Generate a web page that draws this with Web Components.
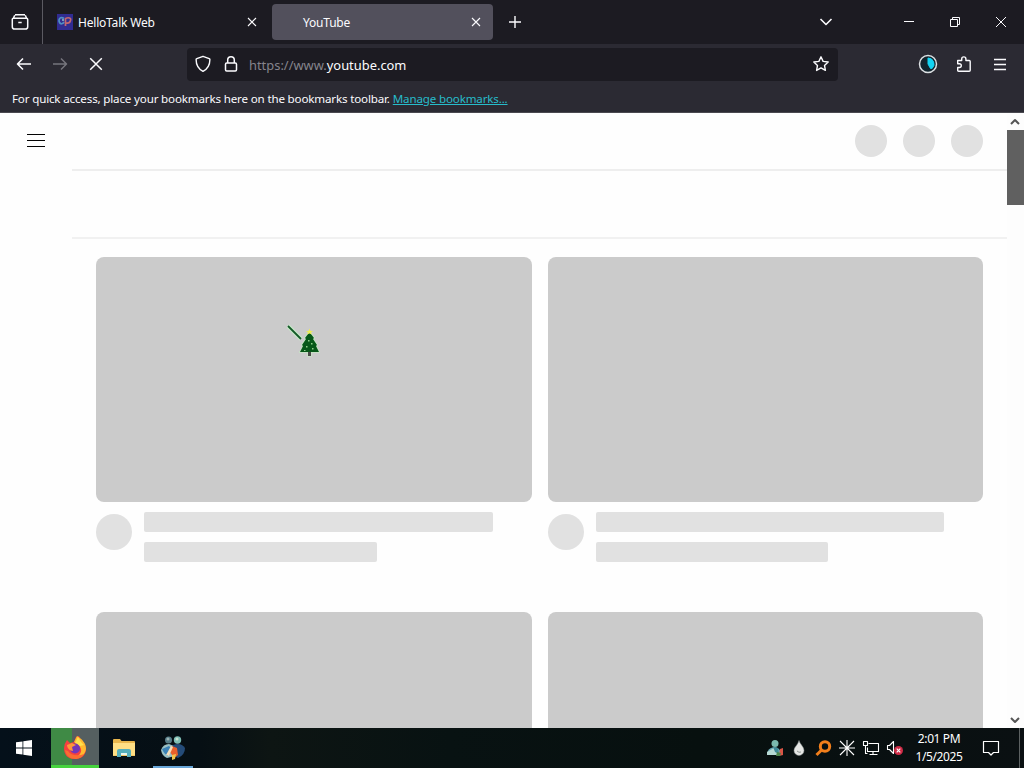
<!DOCTYPE html>
<html lang="en">
<head>
<meta charset="utf-8">
<title>YouTube</title>
<style>
  body {
    margin: 0;
    width: 1024px;
    height: 768px;
    overflow: hidden;
    font-family: "Noto Sans", "Open Sans", sans-serif;
    font-size: 12px;
  }
</style>
</head>
<body>
<desktop-screen>
  <browser-tabs>
    <browser-tab label="HelloTalk Web" icon="hellotalk"></browser-tab>
    <browser-tab label="YouTube" active></browser-tab>
  </browser-tabs>
  <browser-toolbar></browser-toolbar>
  <bookmarks-bar>For quick access, place your bookmarks here on the bookmarks toolbar.</bookmarks-bar>
  <page-view>
    <skeleton-header></skeleton-header>
    <skeleton-grid>
      <skeleton-card></skeleton-card>
      <skeleton-card></skeleton-card>
      <skeleton-card></skeleton-card>
      <skeleton-card></skeleton-card>
    </skeleton-grid>
  </page-view>
  <task-bar></task-bar>
  <tree-cursor></tree-cursor>
</desktop-screen>

<script>
const ICONS = {
  recent: [18, 18, '<path d="M4 1.700h10M2.500 5.200h13a1.200 1.200 0 0 1 1.200 1.200v7.300a2.400 2.400 0 0 1-2.400 2.400H3.700a2.400 2.400 0 0 1-2.400-2.400V6.400a1.200 1.200 0 0 1 1.200-1.200zM2.500 5l1.200-2.800M15.500 5l-1.200-2.800M7.300 9.500h3.400"/>', 1.5],
  hellotalk: [16, 16, '<path fill="#302c91" stroke="none" d="M0 0h16v16H0z"/><path d="M7 4.500C3.500 2 1 5 2.500 8.500 3.500 10.500 6 10 7 8" stroke="#4f8fc3"/><path d="M8.500 4v8M8.500 4.500c3-1.500 6-.5 5 2-.5 2-2 3-4.500 2.500" stroke="#c1676f"/><path d="M5 6h2" stroke="#8ec3c8"/>', 1.7],
  close: [10, 10, '<path d="M1 1l8 8M9 1L1 9"/>', 1.1],
  plus: [14, 14, '<path d="M7 1v12M1 7h12"/>', 1.4],
  chevron: [14, 10, '<path d="M1.500 2l5.500 5.500L12.500 2"/>', 1.6],
  minimize: [12, 12, '<path d="M1 5.500h10"/>', 1],
  restore: [12, 12, '<path d="M1.500 3.500h7v7h-7zM3.500 3.500v-2h7v7h-2"/>', 1],
  winclose: [12, 12, '<path d="M1 1l10 10M11 1L1 11"/>', 1],
  back: [16, 16, '<path d="M15 8H1.500M7 2.500L1.500 8 7 13.500"/>', 1.6],
  forward: [16, 16, '<path d="M1 8h13.500M9 2.500L14.500 8 9 13.500"/>', 1.5],
  stop: [14, 14, '<path d="M1.200 1.200l11.600 11.600M12.800 1.200L1.200 12.800"/>', 1.5],
  shield: [16, 18, '<path d="M8 1.300l6.200 2.300c.5.2.7.5.7.9C14.900 10 12.500 14 8 16.400 3.500 14 1.100 10 1.100 4.500c0-.4.2-.7.7-.9z"/>', 1.4],
  lock: [14, 18, '<rect x="1.500" y="8" width="11" height="8" rx="1.200"/><path d="M3.700 8V5a3.300 3.300 0 0 1 6.600 0v3"/>', 1.5],
  star: [18, 18, '<path d="M9 1.800l2.100 4.600 5.100.6-3.700 3.400.9 5L9 12.900l-4.400 2.500.9-5L1.800 7l5.100-.6z"/>', 1.4],
  addon: [20, 20, '<circle cx="10" cy="10" r="8.500" fill="#12252e" stroke="#dce0e3"/><path d="M10 4a6 6 0 0 1 4.200 10.300L12.500 14.500 10 10z" fill="#13d4f3" stroke="#13d4f3" stroke-width="1"/>', 1.5],
  puzzle: [18, 18, '<path d="M2.700 5.500h4V4a2.100 2.100 0 0 1 4.200 0v1.500h3.300q1 0 1 1v8.700q0 1-1 1H3.700q-1 0-1-1v-2.700h1.700a1.900 1.900 0 0 0 0-3.800H2.700z"/>', 1.4],
  menu: [14, 12, '<path d="M1 1.500h12M1 6.500h12M1 11.500h12"/>', 1.3],
  guide: [20, 16, '<path d="M1 1.500h18M1 7.500h18M1 13.500h18"/>', 1],
  scrollup: [12, 10, '<path d="M2 7l4-4 4 4"/>', 2],
  scrolldown: [12, 10, '<path d="M2 3l4 4 4-4"/>', 2],
  start: [16, 16, '<path fill="#fff" stroke="none" d="M0 2.300l6.500-.9v6.200H0zM7.300 1.300L16 0v7.600H7.300zM0 8.400h6.500v6.200L0 13.700zM7.300 8.400H16V16l-8.700-1.300z"/>', 1],
  firefox: [24, 24, '<g stroke="none"><path d="M4 4l3 3 4-1 2-5 3-1 2 4 3 3q2 3 2 7c-1 7-6 9-12 9S1 19 1 12q0-4 3-8z" fill="#f5403f"/><path d="M14 0c5 3 9 7 9 13-1 6-6 10-12 9 6-2 9-7 6-11l-6-5z" fill="#ffb92f"/><path d="M15 1l3 5 3 3-4 1-5-3z" fill="#ffe04e"/><path d="M2 14c1 6 5 9 11 9 4-.5 6-2 8-5-5 2-13 2-16-3z" fill="#fa6d32"/><circle cx="12" cy="12.500" r="5" fill="#7336b8"/><path d="M4 9l5-2 4 2-4 2 1 4c-3 0-6-3-6-6z" fill="#ff963a"/></g>', 1],
  folder: [22, 20, '<g stroke="none"><path d="M0 2q0-1 1-1h6l1.500 2H21q1 0 1 1v14H0z" fill="#e9b64d"/><path d="M0 5h22v12.500H0z" fill="#ffdf85"/><path d="M4 19v-6q0-2 2-2h10q2 0 2 2v6h-4v-4H8v4z" fill="#55aebb"/><path d="M8 15h6v2H8z" fill="#e8f4ec"/></g>', 1],
  messenger: [24, 24, '<g stroke="none"><circle cx="7.500" cy="4" r="3.500" fill="#557c87"/><circle cx="7" cy="3" r="1.500" fill="#9cb4b4"/><circle cx="16.500" cy="4" r="3.700" fill="#7dbdb4"/><circle cx="16" cy="3" r="1.500" fill="#c8e5d2"/><path d="M0 14Q2 8 8 8l5 2 1 10-8 2q-5-2-6-8z" fill="#9ac0c4"/><path d="M12 9q8-3 12 3 0 7-7 10l-6-3z" fill="#244b78"/><path d="M1 13l7-3 4 4-5 6q-4-2-6-7z" fill="#3b82b6"/><path d="M11 10l5 2 1 7-4 3-4-6z" fill="#e8602c"/><path d="M5 19l5-9 2 1-4 9z" fill="#f5dfbc"/><path d="M11 19l4-1-1 5-3 1z" fill="#f1c44b"/></g>', 1],
  person: [18, 18, '<g stroke="none"><circle cx="9" cy="4.500" r="3.500" fill="#7bb9ae"/><path d="M1 16q0-7 7-8 6 0 8 8z" fill="#69aab7"/><path d="M1 13l7-4 4 7H1z" fill="#b7d9d4"/><path d="M7 8l5 1 1 6-4-2z" fill="#3e8996"/><path d="M14 10l3-1v7l-4 1z" fill="#d85546"/><path d="M11 13l4 1-1 3h-4z" fill="#4e854c"/></g>', 1],
  drop: [12, 16, '<path d="M6 .5c1 4 5 6 5 10a5 5 0 0 1-10 0C1 7 5 5 6 .5z" fill="#e4e6e4" stroke="#8a9292" stroke-width=".5"/><path d="M4 11q2 2 4 1" stroke="#8e9592"/>', 1],
  search: [17, 17, '<circle cx="10" cy="6.500" r="4.700" stroke="#f27f1b"/><path d="M6.600 10L1.500 15" stroke="#f27f1b"/>', 3],
  spark: [18, 18, '<path d="M9 1v16M1 9h16M2 2l14 14M16 2L2 16"/>', 1.1],
  network: [18, 16, '<path d="M6.500 3.500h10v8h-11v-4M11 11.500v3M7.500 14.500h8M1.500 1.500h4v4h-4zM3.500 5.500v8h2"/>', 1.1],
  volume: [18, 16, '<path d="M1.500 5.500h2l4-4v12l-4-4h-2z"/><circle cx="12.500" cy="10.500" r="4.500" fill="#cf2b46" stroke="none"/><path d="M10.700 8.700l3.600 3.600M14.300 8.700l-3.600 3.600" stroke="#fff"/>', 1.1],
  notice: [18, 18, '<path d="M1.500 2.500h15v11h-5l-2.500 2.500-2.500-2.500h-5z"/>', 1.2]
};

class UiIcon extends HTMLElement {
  connectedCallback() {
    const [w, h, body, stroke] = ICONS[this.getAttribute('name')];
    this.attachShadow({ mode: 'open' }).innerHTML = `
      <style>
        :host { display: inline-flex; flex: none; align-items: center; justify-content: center; }
        svg { display: block; overflow: visible; }
      </style>
      <svg width="${w}" height="${h}" viewBox="0 0 ${w} ${h}" fill="none" stroke="currentColor"
        stroke-width="${stroke}" stroke-linejoin="round">${body}</svg>
    `;
  }
}

// small helper for the elements that only need static markup
function define(name, markup) {
  customElements.define(name, class extends HTMLElement {
    constructor() {
      super();
      this.attachShadow({ mode: 'open' }).innerHTML = markup;
    }
  });
}

class BrowserTab extends HTMLElement {
  connectedCallback() {
    const icon = this.getAttribute('icon');
    this.attachShadow({ mode: 'open' }).innerHTML = `
      <style>
        :host {
          display: flex; align-items: center; box-sizing: border-box;
          width: 221px; height: 36px; padding: 0 12px 0 9px;
          border-radius: 4px; color: #fbfbfe;
        }
        :host([active]) { background: #52505c; }
        .favicon { width: 16px; height: 16px; margin-right: 5px; }
        :host([active]) .favicon { width: 22px; margin-right: 0; }
        .label { flex: 1; padding-top: 1px; font-size: 12px; letter-spacing: -0.2px; }
      </style>
      <span class="favicon">${icon ? `<ui-icon name="${icon}"></ui-icon>` : ''}</span>
      <span class="label">${this.getAttribute('label')}</span>
      <ui-icon name="close"></ui-icon>
    `;
  }
}

define('desktop-screen', `
  <style>
    :host { display: flex; flex-direction: column; position: relative; width: 1024px; height: 768px; background: #fefefe; }
  </style>
  <slot></slot>
`);

define('browser-tabs', `
  <style>
    :host { display: flex; align-items: center; height: 44px; flex: none; background: #1c1b22; color: #fbfbfe; }
    .recent { width: 43px; height: 44px; padding-right: 2px; box-sizing: border-box; border-right: 1px solid #5b5a62; }
    .tabs { display: flex; gap: 3px; margin-left: 5px; }
    .plus { width: 43px; }
    .all { width: 36px; margin-left: auto; margin-right: 42px; }
    .win { width: 46px; height: 44px; }
  </style>
  <ui-icon class="recent" name="recent"></ui-icon>
  <div class="tabs"><slot></slot></div>
  <ui-icon class="plus" name="plus"></ui-icon>
  <ui-icon class="all" name="chevron"></ui-icon>
  <ui-icon class="win" name="minimize"></ui-icon>
  <ui-icon class="win" name="restore"></ui-icon>
  <ui-icon class="win" name="winclose"></ui-icon>
`);

define('browser-toolbar', `
  <style>
    :host {
      display: flex; align-items: center; box-sizing: border-box; flex: none;
      height: 41px; padding: 0 6px; background: #2b2a33; color: #fbfbfe;
    }
    .btn { width: 36px; height: 36px; padding-bottom: 1px; }
    .dim { color: #76757d; }
    .url {
      display: flex; align-items: center; box-sizing: border-box;
      width: 651px; height: 33px; margin: 0 auto 0 73px; padding: 0 8px;
      border-radius: 4px; background: #1c1b22;
    }
    .url ui-icon { padding-bottom: 1px; }
    .lock { margin: 0 11px 0 13px; }
    .text { flex: 1; font-size: 12.900px; color: #85848c; white-space: nowrap; }
    .text b { font-weight: normal; color: #fbfbfe; }
  </style>
  <ui-icon class="btn" name="back"></ui-icon>
  <ui-icon class="btn dim" name="forward"></ui-icon>
  <ui-icon class="btn" name="stop"></ui-icon>
  <div class="url">
    <ui-icon name="shield"></ui-icon>
    <ui-icon class="lock" name="lock"></ui-icon>
    <span class="text">https://www.<b>youtube.com</b></span>
    <ui-icon name="star"></ui-icon>
  </div>
  <ui-icon class="btn" name="addon"></ui-icon>
  <ui-icon class="btn" name="puzzle"></ui-icon>
  <ui-icon class="btn" name="menu"></ui-icon>
`);

define('bookmarks-bar', `
  <style>
    :host {
      display: flex; align-items: center; box-sizing: border-box; flex: none;
      height: 28px; padding: 0 12px; border-bottom: 1px solid #4a4950;
      background: #2b2a33; color: #fbfbfe; white-space: nowrap;
      font-size: 11.600px; letter-spacing: -0.166px;
    }
    a { margin-left: 3px; color: #27bccb; text-decoration: underline; }
  </style>
  <slot></slot><a>Manage bookmarks...</a>
`);

define('page-view', `
  <style>
    :host { display: flex; flex: 1; min-height: 0; background: #fefefe; }
    .content { flex: 1; height: 615px; overflow: hidden; }
    .scroll { display: flex; flex-direction: column; width: 17px; color: #555; background: #fdfdfd; }
    .scroll ui-icon { height: 17px; padding-right: 1px; }
    .thumb { height: 75px; background: #606060; margin-bottom: auto; }
  </style>
  <div class="content"><slot></slot></div>
  <div class="scroll">
    <ui-icon name="scrollup"></ui-icon>
    <div class="thumb"></div>
    <ui-icon name="scrolldown"></ui-icon>
  </div>
`);

define('skeleton-header', `
  <style>
    :host { display: block; color: #030303; }
    .top { display: flex; align-items: center; height: 56px; padding: 0 24px 0 26px; }
    .dots { display: flex; gap: 16px; margin-left: auto; }
    .dots i { width: 32px; height: 32px; border-radius: 50%; background: #e1e1e1; }
    .chips { height: 66px; margin-left: 72px; border-top: 2px solid #eee; border-bottom: 2px solid #f1f1f1; }
  </style>
  <div class="top">
    <ui-icon name="guide"></ui-icon>
    <div class="dots"><i></i><i></i><i></i></div>
  </div>
  <div class="chips"></div>
`);

define('skeleton-grid', `
  <style>
    :host { display: grid; grid-template-columns: 436px 435px; column-gap: 16px; row-gap: 50px; padding: 18px 0 0 96px; }
  </style>
  <slot></slot>
`);

define('skeleton-card', `
  <style>
    :host { display: block; height: 305px; }
    .thumb { height: 245px; border-radius: 8px; background: #cbcbcb; }
    .details { display: flex; padding-top: 10px; }
    .avatar { width: 36px; height: 36px; margin: 2px 12px 0 0; border-radius: 50%; background: #e1e1e1; }
    .lines { flex: 1; }
    .line { height: 20px; border-radius: 2px; background: #e1e1e1; }
    .title { width: 90%; }
    .meta { width: 60%; margin-top: 10px; }
  </style>
  <div class="thumb"></div>
  <div class="details">
    <div class="avatar"></div>
    <div class="lines">
      <div class="line title"></div>
      <div class="line meta"></div>
    </div>
  </div>
`);

define('task-bar', `
  <style>
    :host {
      display: flex; align-items: center; flex: none; height: 40px; color: #fff;
      background: linear-gradient(90deg, #04101a 0, #060f14 200px, #0d1513 270px, #081212 450px, #07100f 700px, #0a1012 1024px);
    }
    .app { width: 48px; height: 40px; box-sizing: border-box; }
    .start { margin-right: 3px; }
    .firefox { background: linear-gradient(90deg, #3f8a45 21px, #555f60 21px); border-bottom: 3px solid #46d33e; padding-top: 2px; }
    .folder { padding-left: 2px; }
    .running { width: 40px; margin-left: 6px; border-bottom: 2px solid #68a6d8; padding-top: 1px; }
    .tray { display: flex; align-items: center; margin-left: auto; }
    .tray ui-icon { width: 24px; }
    .clock {
      width: 62px; margin-left: 1px; text-align: center; white-space: nowrap;
      font-size: 12px; line-height: 18px; letter-spacing: -0.400px;
    }
    .tray .notice { width: 42px; }
    .peek { width: 4px; height: 40px; margin-left: 7px; border-left: 1px solid #5c6162; }
  </style>
  <ui-icon class="app start" name="start"></ui-icon>
  <ui-icon class="app firefox" name="firefox"></ui-icon>
  <ui-icon class="app folder" name="folder"></ui-icon>
  <ui-icon class="app running" name="messenger"></ui-icon>
  <div class="tray">
    <ui-icon name="person"></ui-icon>
    <ui-icon name="drop"></ui-icon>
    <ui-icon name="search"></ui-icon>
    <ui-icon name="spark"></ui-icon>
    <ui-icon name="network"></ui-icon>
    <ui-icon name="volume"></ui-icon>
    <div class="clock">2:01 PM<br>1/5/2025</div>
    <ui-icon class="notice" name="notice"></ui-icon>
    <div class="peek"></div>
  </div>
`);

// the mouse pointer floats over the page
define('tree-cursor', `
  <style>
    :host { position: absolute; left: 286px; top: 324px; }
    svg { display: block; }
  </style>
  <svg width="34" height="34" viewBox="0 0 34 34">
    <path d="M2 2l13 13" stroke="#c8ebc9" stroke-width="4"/>
    <path d="M2 2l13 13" stroke="#145a28" stroke-width="1.800"/>
    <path d="M23.500 8l4.500 6-1 1 4 6-1 1 3 6h-8v4h-3v-4h-8l3-6-1-1 4-6-1-1z" fill="#075819" stroke="#c6e8c4" stroke-width="1.500" paint-order="stroke"/>
    <path d="M22 28h3v4h-3z" fill="#4a4a48"/>
    <path d="M23.500 4.500l1 2.500h2.500l-2 1.500 1 2-2.500-1-2.500 1 1-2-2-1.500h2.500z" fill="#eced58"/>
    <path d="M22 16h1.500v1.500H22zM25 19h1.500v1.500H25zM20 22h1.500v1.500H20zM26 24h1.500v1.500H26zM18 26h1.500v1H18z" fill="#8fd18b"/>
  </svg>
`);

customElements.define('browser-tab', BrowserTab);
customElements.define('ui-icon', UiIcon);
</script>
</body>
</html>
